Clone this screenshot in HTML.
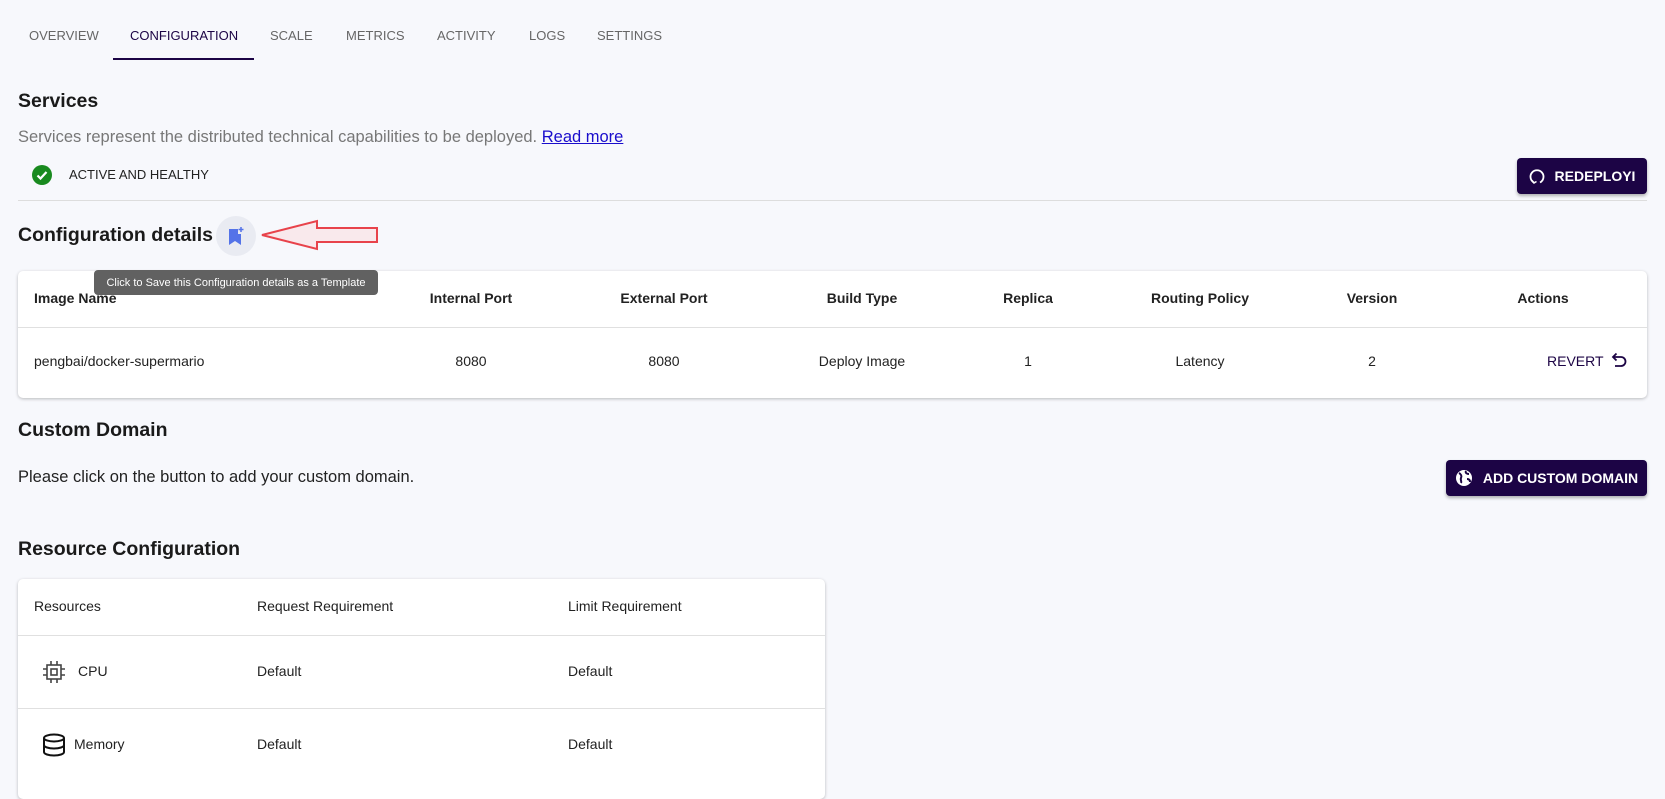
<!DOCTYPE html>
<html><head><meta charset="utf-8"><style>
*{margin:0;padding:0;box-sizing:border-box}
body{width:1665px;height:777px;background:#f7f8fc;font-family:"Liberation Sans",sans-serif;color:#222;position:relative;overflow:hidden}
.a{position:absolute;white-space:nowrap}
.tab{top:28px;font-size:13px;color:#666}
.h{font-size:19.5px;color:#1a1a1a;font-weight:bold}
.card{position:absolute;background:#fff;border-radius:5px;box-shadow:0 1px 3px rgba(0,0,0,.25)}
.btn{position:absolute;background:#1c0445;color:#fff;border-radius:4px;font-size:14px;font-weight:bold;display:flex;align-items:center;justify-content:center;gap:10px;box-shadow:0 2px 3px rgba(0,0,0,.3)}
.th{font-size:14px;font-weight:bold;color:#222;transform:translateX(-50%)}
.td{font-size:14px;color:#222;transform:translateX(-50%)}
.line{position:absolute;height:1px;background:#e0e0e0}
</style></head><body>
<div class="a tab" style="left:29px">OVERVIEW</div>
<div class="a tab" style="left:130px;color:#1c0445">CONFIGURATION</div>
<div style="position:absolute;left:113px;top:58px;width:141px;height:2px;background:#1c0445"></div>
<div class="a tab" style="left:270px">SCALE</div>
<div class="a tab" style="left:346px">METRICS</div>
<div class="a tab" style="left:437px">ACTIVITY</div>
<div class="a tab" style="left:529px">LOGS</div>
<div class="a tab" style="left:597px">SETTINGS</div>

<div class="a h" style="left:18px;top:90px">Services</div>
<div class="a" style="left:18px;top:128px;font-size:16.5px;color:#777">Services represent the distributed technical capabilities to be deployed. <span style="color:#1a0dcc;text-decoration:underline">Read more</span></div>
<svg class="a" style="left:32px;top:165px" width="20" height="20" viewBox="0 0 20 20"><circle cx="10" cy="10" r="10" fill="#198a1f"/><path d="M5.5 10.5l3 3 6-6.5" stroke="#fff" stroke-width="2.2" fill="none"/></svg>
<div class="a" style="left:69px;top:167px;font-size:13px;color:#222">ACTIVE AND HEALTHY</div>
<div class="btn" style="left:1517px;top:158px;width:130px;height:36px"><svg width="16" height="16" viewBox="0 0 16 16"><path d="M5 14.5A6.5 6.5 0 1 1 11 14.5" stroke="#fff" stroke-width="1.8" fill="none"/><path d="M3 12.5l2 2.5 2.5-1.5" stroke="#fff" stroke-width="1.5" fill="none"/></svg>REDEPLOYI</div>
<div class="line" style="left:18px;top:200px;width:1629px;background:#ddd"></div>

<div class="a h" style="left:18px;top:224px">Configuration details</div>
<div style="position:absolute;left:216px;top:216px;width:40px;height:40px;border-radius:50%;background:#e9ebf2"></div>
<svg class="a" style="left:228px;top:226px" width="18" height="20" viewBox="0 0 18 20"><path d="M1 3h9v5h3v11l-6-4-6 4z" fill="#5473e8"/><path d="M13 1v5M10.5 3.5h5" stroke="#5473e8" stroke-width="1.5"/></svg>
<svg class="a" style="left:260px;top:218px" width="120" height="34" viewBox="0 0 120 34"><path d="M2 17L57 3v7h60v14H57v7z" fill="rgba(255,200,200,.3)" stroke="#e8434b" stroke-width="2"/></svg>

<div class="card" style="left:18px;top:271px;width:1629px;height:127px"></div>
<div class="line" style="left:18px;top:327px;width:1629px"></div>
<div class="a" style="left:34px;top:290px;font-size:14px;font-weight:bold">Image Name</div>
<div class="a th" style="left:471px;top:290px">Internal Port</div>
<div class="a th" style="left:664px;top:290px">External Port</div>
<div class="a th" style="left:862px;top:290px">Build Type</div>
<div class="a th" style="left:1028px;top:290px">Replica</div>
<div class="a th" style="left:1200px;top:290px">Routing Policy</div>
<div class="a th" style="left:1372px;top:290px">Version</div>
<div class="a th" style="left:1543px;top:290px">Actions</div>
<div class="a" style="left:34px;top:353px;font-size:14px">pengbai/docker-supermario</div>
<div class="a td" style="left:471px;top:353px">8080</div>
<div class="a td" style="left:664px;top:353px">8080</div>
<div class="a td" style="left:862px;top:353px">Deploy Image</div>
<div class="a td" style="left:1028px;top:353px">1</div>
<div class="a td" style="left:1200px;top:353px">Latency</div>
<div class="a td" style="left:1372px;top:353px">2</div>
<div class="a" style="left:1547px;top:353px;font-size:14px;color:#1c0445">REVERT</div>
<svg class="a" style="left:1610px;top:352px" width="18" height="18" viewBox="0 0 18 18"><path d="M4 5h7a4.5 4.5 0 0 1 0 9H5" stroke="#1c0445" stroke-width="1.8" fill="none"/><path d="M6.5 1.5L3 5l3.5 3.5" stroke="#1c0445" stroke-width="1.8" fill="none"/></svg>

<div class="a h" style="left:18px;top:419px">Custom Domain</div>
<div class="a" style="left:18px;top:468px;font-size:16.5px">Please click on the button to add your custom domain.</div>
<div class="btn" style="left:1446px;top:460px;width:201px;height:36px"><svg width="18" height="18" viewBox="0 0 18 18"><circle cx="9" cy="9" r="8" fill="#fff"/><path d="M4 4c2 1 3 3 2 5s1 3 0 5M11 2c-1 2 1 3 3 3M12 10c2 0 3 1 3 3" stroke="#1c0445" stroke-width="2" fill="none"/></svg>ADD CUSTOM DOMAIN</div>

<div class="a h" style="left:18px;top:538px">Resource Configuration</div>
<div class="card" style="left:18px;top:579px;width:807px;height:220px"></div>
<div class="line" style="left:18px;top:635px;width:807px"></div>
<div class="line" style="left:18px;top:708px;width:807px"></div>
<div class="a" style="left:34px;top:598px;font-size:14px">Resources</div>
<div class="a" style="left:257px;top:598px;font-size:14px">Request Requirement</div>
<div class="a" style="left:568px;top:598px;font-size:14px">Limit Requirement</div>
<svg class="a" style="left:42px;top:660px" width="24" height="24" viewBox="0 0 24 24" fill="none" stroke="#444" stroke-width="1.6"><rect x="5" y="5" width="14" height="14"/><rect x="9" y="9" width="6" height="6"/><path d="M9 1v4M15 1v4M9 19v4M15 19v4M1 9h4M1 15h4M19 9h4M19 15h4"/></svg>
<div class="a" style="left:78px;top:663px;font-size:14px">CPU</div>
<div class="a" style="left:257px;top:663px;font-size:14px">Default</div>
<div class="a" style="left:568px;top:663px;font-size:14px">Default</div>
<svg class="a" style="left:42px;top:733px" width="24" height="24" viewBox="0 0 24 24" fill="none" stroke="#111" stroke-width="2"><ellipse cx="12" cy="5" rx="10" ry="3.5"/><path d="M2 5v14c0 2 4.5 3.5 10 3.5s10-1.5 10-3.5V5M2 12c0 2 4.5 3.5 10 3.5s10-1.5 10-3.5"/></svg>
<div class="a" style="left:74px;top:736px;font-size:14px">Memory</div>
<div class="a" style="left:257px;top:736px;font-size:14px">Default</div>
<div class="a" style="left:568px;top:736px;font-size:14px">Default</div>

<div class="a" style="left:94px;top:270px;width:284px;height:25px;background:#616161;border-radius:4px;color:#fff;font-size:11px;display:flex;align-items:center;justify-content:center">Click to Save this Configuration details as a Template</div>
</body></html>
